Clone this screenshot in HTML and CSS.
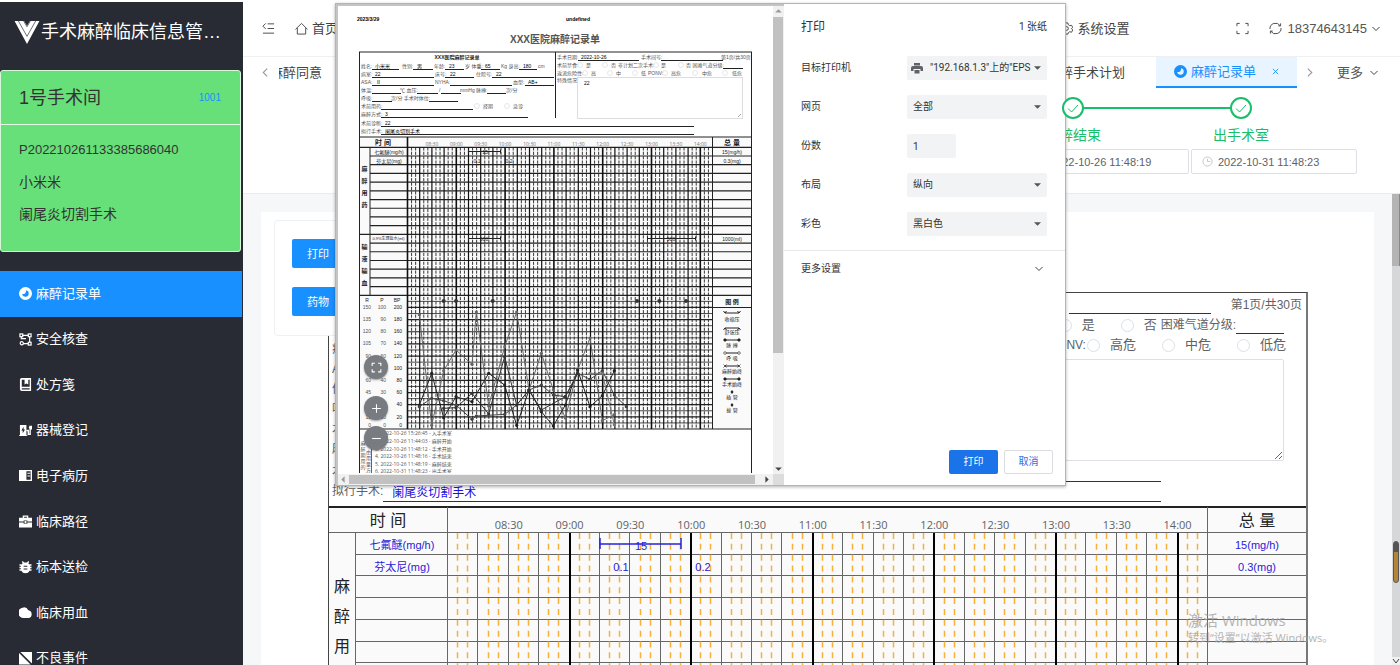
FILE: index.html
```html
<!DOCTYPE html>
<html lang="zh-CN">
<head>
<meta charset="utf-8">
<title>手术麻醉临床信息管理系统</title>
<link rel="stylesheet" href="styles.css">
</head>
<body>
<div class="app">
  <aside class="sidebar">
    <div class="brand">
      <svg class="brand-logo" viewBox="0 0 26 24"><path d="M0 0h10l3 5 3-5h10L13 24z" fill="#fff"/><path d="M4 0 13 16 22 0M9.500 0l3.500 6 3.500-6" fill="none" stroke="#282b33" stroke-width=".7"/></svg>
      <h1 class="brand-name">手术麻醉临床信息管…</h1>
    </div>
    <section class="room">
      <header class="room-head"><h2 class="room-name">1号手术间</h2><a class="room-no" href="#">1001</a></header>
      <div class="room-body"><p class="room-id">P202210261133385686040</p><p>小米米</p><p>阑尾炎切割手术</p></div>
    </section>
    <nav class="menu">
      <a class="menu-item active" href="#"><svg viewBox="0 0 14 14"><path fill-rule="evenodd" d="M7 0a7 7 0 1 0 0 14 7 7 0 0 0 0-14zM7.500 3.500a3.500 3.500 0 1 1-4 4 3.200 3.200 0 0 0 4-4z"/></svg>麻醉记录单</a>
      <a class="menu-item" href="#"><svg viewBox="0 0 14 14" class="line"><path d="M4 2.500h6M11.500 4v6M4.500 11.500H10M2.500 4v2h5"/><rect x="1" y="1" width="3" height="3"/><rect x="10" y="1" width="3" height="3"/><circle cx="3" cy="11" r="1.700"/><rect x="10" y="10" width="3" height="3"/></svg>安全核查</a>
      <a class="menu-item" href="#"><svg viewBox="0 0 14 14"><path fill-rule="evenodd" d="M3 0h10v14H3a2.200 2.200 0 0 1-2-2V2a2 2 0 0 1 2-2zm0 1.800V9.500h8.500V1.800H10V7L8 5.800 6 7V1.800zM3 11v1.300h8.500V11z"/></svg>处方笺</a>
      <a class="menu-item" href="#"><svg viewBox="0 0 14 14"><path fill-rule="evenodd" d="M1 1h7v11h1v1H0v-1h1zm4 2L2.500 7H4v3l2.500-4H5z"/><path d="M8 7h2v4h2V5l-1-2" fill="none" stroke="#fff" stroke-width="1.500"/><path d="M11 2h3v4h-2z"/></svg>器械登记</a>
      <a class="menu-item" href="#"><svg viewBox="0 0 14 14"><path fill-rule="evenodd" d="M0 1h14v12H0zm8 1.500v9h4.500v-9zM9 4h3v1.200H9zm0 3h3v1.200H9z"/></svg>电子病历</a>
      <a class="menu-item" href="#"><svg viewBox="0 0 14 14"><path fill-rule="evenodd" d="M4 3V.5h6V3h4v4H9V6H5v1H0V3zm1.500 0h3V2h-3zM0 8h5v1.500h4V8h5v5.500H0z"/><rect x="6" y="6.500" width="2" height="2.500"/></svg>临床路径</a>
      <a class="menu-item" href="#"><svg viewBox="0 0 14 14"><path fill-rule="evenodd" d="M4 0l1.500 1.500h3L10 0l1 1-1 1.500 1 1h2.500V5H12v1.200h1.500v1.600H12V9h1.500v1.500h-2a5 5 0 0 1-9 0h-2V9H2V7.800H.5V6.200H2V5H.5V3.500H3l1-1L3 1zm1 5v1.200h4V5zm0 3v1.200h4V8z"/></svg>标本送检</a>
      <a class="menu-item" href="#"><svg viewBox="0 0 14 14"><path d="M5 1.500a5 5 0 0 1 5 3A4.300 4.300 0 0 1 10 13H5A5.700 5.700 0 0 1 5 1.500z"/></svg>临床用血</a>
      <a class="menu-item" href="#"><svg viewBox="0 0 14 14"><path d="M1.500 0H14v12.500zM0 1l12.500 12.500H7L0 13.500z"/></svg>不良事件</a>
    </nav>
  </aside>

  <main class="main">
    <header class="topbar">
      <button class="icon-btn fold" aria-label="收起"><svg viewBox="0 0 14 14"><path d="M6 2h7M6 7h7M1 12h12M4 1.500 1 4.500l3 3"/></svg></button>
      <a class="nav-link" href="#"><svg viewBox="0 0 14 14"><path d="M.5 8 7 1.500 13.500 8M2.500 6.500v6.500h9V6.500"/></svg>首页</a>
      <a class="nav-link settings" href="#"><svg viewBox="0 0 14 14"><path d="M5.500 1h3l.5 2 1.500 1 2-.5 1.200 2.500L12.300 7l1.400 1.500-1.200 2.500-2-.5L9 11.500 8.500 13h-3L5 11.500l-1.500-1-2 .5L.3 8.500 1.700 7 .3 5.500 1.500 3.500l2 .5L5 3z"/><circle cx="7" cy="7" r="2"/></svg>系统设置</a>
      <button class="icon-btn" aria-label="全屏"><svg viewBox="0 0 14 14"><path d="M1 4.500V1.500h3M10 1.500h3v3M13 9.500v3h-3M4 12.500H1v-3"/></svg></button>
      <button class="user"><svg viewBox="0 0 14 14"><path d="M1 7.500A6 6 0 0 1 12 4M13 6.500A6 6 0 0 1 2 10M12.500 1.500v2.700H10M1.500 12.500V9.800H4"/></svg>18374643145<svg class="chev" viewBox="0 0 8 8"><path d="M.5 2 4 5.500 7.500 2"/></svg></button>
    </header>
    <nav class="tabs">
      <button class="arrow" aria-label="向左"><svg viewBox="0 0 8 8"><path d="M5.500.5 2 4l3.500 3.500"/></svg></button>
      <div class="tab-strip">
        <a class="tab-first" href="#">麻醉同意</a>
        <a class="tab-plan" href="#">麻醉手术计划</a>
        <a class="tab-active" href="#"><svg class="tab-icon" viewBox="0 0 14 14"><path fill-rule="evenodd" d="M7 0a7 7 0 1 0 0 14 7 7 0 0 0 0-14zM7.500 3.500a3.500 3.500 0 1 1-4 4 3.200 3.200 0 0 0 4-4z"/></svg>麻醉记录单<svg class="tab-close" viewBox="0 0 8 8"><path d="M1 1l6 6M7 1 1 7"/></svg></a>
      </div>
      <button class="arrow" aria-label="向右"><svg viewBox="0 0 8 8"><path d="M2.500.5 6 4 2.500 7.500"/></svg></button>
      <button class="more">更多<svg class="chev" viewBox="0 0 8 8"><path d="M.5 2 4 5.500 7.500 2"/></svg></button>
    </nav>
    <section class="steps">
      <div class="step">
        <div class="step-mark"><svg viewBox="0 0 22 22"><circle cx="11" cy="11" r="10"/><path d="M6 11.500l3.500 3.500 6.500-7"/></svg></div>
        <label class="step-name" for="t1">麻醉结束</label>
        <div class="step-time"><svg viewBox="0 0 12 12"><circle cx="6" cy="6" r="5"/><path d="M6 3v3h3"/></svg><input id="t1" value="2022-10-26 11:48:19"></div>
      </div>
      <div class="step last">
        <div class="step-mark"><svg viewBox="0 0 22 22"><circle cx="11" cy="11" r="10"/><path d="M6 11.500l3.500 3.500 6.500-7"/></svg></div>
        <label class="step-name" for="t2">出手术室</label>
        <div class="step-time"><svg viewBox="0 0 12 12"><circle cx="6" cy="6" r="5"/><path d="M6 3v3h3"/></svg><input id="t2" value="2022-10-31 11:48:23"></div>
      </div>
    </section>
    <section class="content">
      <div class="card">
        <div class="tools"><button class="primary">打印</button><button class="primary">药物</button></div>
        <div class="sheet">
          <div class="sheet-top">
            <div class="patient">
              <p class="patient-title">XXX医院麻醉记录单</p>
              <p>姓名:</p><p>病室:</p><p>ASA:</p><p>体温:</p><p>呼吸:</p><p>术前用药:</p><p>麻醉方式:</p>
            </div>
            <div class="surgery">
              <div class="row first"><label for="room">手术间号:</label><input id="room" class="blank wide"><span class="pages">第1页/共30页</span></div>
              <div class="row">
                <label class="opt"><input type="radio" name="again">是</label>
                <label class="opt"><input type="radio" name="again">否</label>
                <label class="grade" for="air">困难气道分级:</label><input id="air" class="blank short">
              </div>
              <div class="row ponv"><span>PONV:</span>
                <label class="opt"><input type="radio" name="ponv">高危</label>
                <label class="opt"><input type="radio" name="ponv">中危</label>
                <label class="opt"><input type="radio" name="ponv">低危</label>
              </div>
              <textarea class="note" aria-label="特殊情况"></textarea>
            </div>
          </div>
          <div class="full-row"><label for="diag">术前诊断:</label><input id="diag" value="22"></div>
          <div class="full-row"><label for="op">拟行手术:</label><input id="op" value="阑尾炎切割手术"></div>
          <svg id="record" class="record" viewBox="329 506 977 180"></svg>
        </div>
        <div class="watermark"><p class="wm-big">激活 Windows</p><p class="wm-small">转到“设置”以激活 Windows。</p></div>
      </div>
      <div class="page-scroll"><i class="thumb"></i><i class="pill"></i><svg viewBox="0 0 8 8"><path d="M1 2l3 4 3-4"/></svg></div>
    </section>
  </main>
</div>

<div class="dialog" role="dialog" aria-label="打印">
  <div class="preview">
    <svg id="paper" class="paper" viewBox="338 6 435 467"></svg>
    <div class="vbar"><svg viewBox="0 0 10 10"><path d="M2 6h6L5 3z"/></svg><i></i><svg viewBox="0 0 10 10"><path d="M2 4h6L5 7z" class="dark"/></svg></div>
    <div class="hbar"><svg viewBox="0 0 10 10"><path d="M6 2v6L3 5z"/></svg><i></i><svg viewBox="0 0 10 10"><path d="M4 2v6l3-3z" class="dark"/></svg></div>
    <div class="corner"></div>
    <div class="fabs">
      <button aria-label="适合页面"><svg viewBox="0 0 12 12"><path d="M2 4.500V2h2.500M7.500 2H10v2.500M10 7.500V10H7.500M4.500 10H2V7.500"/></svg></button>
      <button aria-label="放大" class="zoom-in"><svg viewBox="0 0 12 12"><path d="M6 2v8M2 6h8"/></svg></button>
      <button aria-label="缩小"><svg viewBox="0 0 12 12"><path d="M2 6h8"/></svg></button>
    </div>
  </div>
  <form class="options">
    <header class="opt-head"><h2>打印</h2><span>1 张纸</span></header>
    <div class="fields">
      <div class="field"><label for="printer">目标打印机</label><div class="select printer"><svg class="p-icon" viewBox="0 0 12 12"><path fill-rule="evenodd" d="M3 1h6v2.500H3zM2 4h8a2 2 0 0 1 2 2v3H9.500V7h-7v2H0V6a2 2 0 0 1 2-2zm1.500 4h5v3.500h-5z"/></svg><select id="printer"><option>"192.168.1.3"上的"EPS</option></select><svg class="tri" viewBox="0 0 8 4"><path d="M0 0h8L4 4z"/></svg></div></div>
      <div class="field"><label for="pg">网页</label><div class="select"><select id="pg"><option>全部</option></select><svg class="tri" viewBox="0 0 8 4"><path d="M0 0h8L4 4z"/></svg></div></div>
      <div class="field"><label for="num">份数</label><div class="select count"><input id="num" value="1"></div></div>
      <div class="field"><label for="lay">布局</label><div class="select"><select id="lay"><option>纵向</option></select><svg class="tri" viewBox="0 0 8 4"><path d="M0 0h8L4 4z"/></svg></div></div>
      <div class="field"><label for="col">彩色</label><div class="select"><select id="col"><option>黑白色</option></select><svg class="tri" viewBox="0 0 8 4"><path d="M0 0h8L4 4z"/></svg></div></div>
    </div>
    <button type="button" class="more-set">更多设置<svg viewBox="0 0 8 8"><path d="M.5 2 4 5.500 7.500 2"/></svg></button>
    <footer class="actions"><button type="button" class="ok">打印</button><button type="button" class="cancel">取消</button></footer>
  </form>
</div>
<script src="charts.js"></script>
</body>
</html>
```

FILE: styles.css
```css
* { box-sizing: border-box; }
body { margin: 0; height: 100vh; overflow: hidden; background: #fff; color: #444; font: 13px/20px "Liberation Sans", "Noto Sans CJK SC", sans-serif; }
h1, h2, p { margin: 0; font-weight: 400; }
a { color: inherit; text-decoration: none; }
button { border: 0; padding: 0; background: none; color: inherit; font: inherit; display: flex; align-items: center; justify-content: center; }
input, select, textarea { font: inherit; color: inherit; border: 0; padding: 0; margin: 0; background: none; outline: 0; border-radius: 0; }
svg { display: block; flex: none; }

.app { display: flex; height: 100vh; }
.sidebar { flex: none; width: 243px; margin-top: 2px; background: #282b33; color: #fff; overflow: hidden; }
.brand { display: flex; align-items: center; gap: 1px; height: 68px; padding: 0 14px 8px; }
.brand-logo { width: 26px; height: 23px; }
.brand-name { font-size: 18px; white-space: nowrap; }
.room { margin-right: 2px; height: 182px; border: 1px solid #d5f7da; border-radius: 3px; background: #67e079; color: #333; }
.room-head { display: flex; align-items: center; justify-content: space-between; height: 54px; padding: 0 19px 0 18px; border-bottom: 1px solid #e4fbe7; }
.room-name { font-size: 18px; }
.room-no { font-size: 10px; color: #1890ff; }
.room-body { display: flex; flex-direction: column; gap: 12px; padding: 15px 18px; font-size: 14px; }
.room-id { font-size: 13px; }
.menu { display: grid; grid-auto-rows: 1fr; height: 410px; margin-top: 19px; }
.menu-item { display: flex; align-items: center; gap: 4px; padding-left: 19px; margin-right: 1px; }
.menu-item svg { width: 13px; height: 13px; fill: #fff; }
.menu-item svg.line { fill: none; stroke: #fff; stroke-width: 1.300; }
.active { background: #1890ff; }

.main { flex: 1; min-width: 0; display: flex; flex-direction: column; }
.main svg { fill: none; stroke: #444; stroke-width: 1; }
.topbar { display: flex; align-items: center; height: 57px; padding: 1px 20px 0 19px; border-bottom: 1px solid #f0f0f0; flex: none; }
.topbar svg { width: 13px; height: 13px; }
.topbar .chev, .chev { width: 8px; height: 8px; }
.fold { margin-right: 20px; }
.nav-link { display: flex; align-items: center; gap: 4px; }
.settings { margin-left: auto; margin-right: 107px; }
.user { gap: 5px; margin-left: 20px; color: #555; }
.tabs { display: flex; align-items: center; height: 31px; padding: 0 22px 0 18px; flex: none; }
.arrow svg { width: 9px; height: 9px; }
.main .arrow svg { stroke: #999; }
.tab-strip { display: flex; align-items: center; flex: 1; height: 31px; margin: 0 8px 0 9px; overflow: hidden; }
.tab-strip .tab-first { margin-left: -9px; }
.tab-plan { margin-left: auto; margin-right: 31px; }
.tab-active { display: flex; align-items: center; height: 31px; padding: 0 18px; gap: 4px; background: #e8f4ff; border-bottom: 2px solid #1890ff; color: #1890ff; }
.main .tab-icon { width: 13px; height: 13px; fill: #1890ff; stroke: none; }
.main .tab-close { width: 7px; height: 7px; margin-left: 12px; stroke: #1890ff; }
.more { gap: 7px; margin-left: 23px; color: #555; }
.steps { display: flex; justify-content: flex-end; height: 105px; padding: 9px 43px 0 0; flex: none; }
.step { width: 168px; padding-left: 2px; }
.step-mark { display: flex; justify-content: center; position: relative; width: 100px; height: 22px; }
.main .step-mark svg { width: 22px; height: 22px; stroke: #19be6b; stroke-width: 2; fill: #fff; position: relative; z-index: 1; }
.main .step-mark svg path { stroke-width: 1; }
.step:not(.last) .step-mark::after { content: ""; position: absolute; left: 50%; top: 10px; width: 168px; height: 2px; background: #19be6b; }
.step-name { display: block; width: 100px; margin-top: 6px; height: 24px; text-align: center; font-size: 14px; color: #19be6b; }
.step-time { display: flex; align-items: center; gap: 5px; height: 25px; padding: 0 10px; border: 1px solid #dcdfe6; border-radius: 2px; color: #606266; font-size: 11px; }
.step-time svg { width: 11px; height: 11px; }
.main .step-time svg { stroke: #c0c4cc; }
.step-time input { width: 100%; }

.content { flex: 1; min-height: 0; display: flex; background: #f5f7f9; border-top: 1px solid #e9ebee; }
.card { position: relative; flex: 1; margin: 18px 18px 0 18px; padding: 80px 66px 0 67px; background: #fff; overflow: hidden; }
.tools { position: absolute; left: 13px; top: 8px; width: 110px; padding: 18px 17px; display: grid; gap: 18px; border: 1px solid #eef0f2; border-radius: 4px; background: #fff; }
.primary { width: 64px; height: 29px; margin-bottom: 1px; padding-right: 12px; background: #1890ff; border-radius: 2px; color: #fff; font-size: 11px; }
.sheet { border: 1px solid #444; border-right: 2px solid #777; color: #606266; font-size: 12px; }
.sheet-top { display: flex; justify-content: space-between; height: 168px; padding-left: 3px; overflow: hidden; }
.patient-title { height: 26px; }
.surgery { width: 420px; padding-right: 22px; }
.row { display: flex; align-items: center; justify-content: flex-end; height: 20px; }
.row.first { margin-right: -18px; height: 22px; padding-top: 1px; }
.blank { border-bottom: 1px solid #333; height: 18px; }
.wide { width: 142px; margin: 0 20px 0 3px; }
.short { width: 48px; }
.opt { display: flex; align-items: center; gap: 10px; margin-left: 26px; font-size: 13px; }
.opt input { appearance: none; width: 13px; height: 13px; border: 1px solid #dcdfe6; border-radius: 50%; }
.grade { margin-left: 4px; }
.row.ponv { margin-right: -2px; }
.ponv .opt:nth-child(2) { margin-left: 1px; }
.note { display: block; width: 100%; height: 102px; margin-top: 4px; border: 1px solid #dcdfe6; border-radius: 2px; }
.full-row { display: flex; height: 20px; margin: 0 145px 0 3px; }
.full-row input { flex: 1; height: 21px; padding-left: 9px; border-bottom: 1px solid #333; color: #1a10e0; }
.full-row + .record { margin-top: 5px; }
.main .record { width: 100%; height: auto; stroke: none; }
.watermark { position: absolute; right: 22px; top: 398px; width: 164px; color: #a3a3a3; opacity: .8; white-space: nowrap; font-family: "Open Sans", "Noto Sans CJK SC", sans-serif; }
.wm-big { font-size: 15px; }
.wm-small { font-size: 11px; line-height: 16px; }
.page-scroll { width: 8px; background: #d6d7d9; display: flex; flex-direction: column; align-items: center; }
.page-scroll .thumb { width: 8px; height: 72px; background: #b4b4b4; border-right: 1px solid #888; }
.page-scroll .pill { width: 6px; height: 42px; margin-top: 275px; border: 1px solid #555; border-radius: 3px; background: linear-gradient(#555 10px, #b5853c 10px); }
.page-scroll svg { width: 8px; height: 8px; margin-top: auto; background: #f1f1f1; }

.dialog { position: absolute; left: 335px; top: 3px; width: 731px; height: 483px; display: flex; background: #fff; border: 1px solid #b4b4b4; box-shadow: 0 1px 3px rgba(0,0,0,.3); color: #333; }
.preview { position: relative; width: 448px; display: grid; grid-template: 1fr 11px / 1fr 11px; border: solid #c4c4c4; border-width: 2px 0 0 2px; }
.paper { width: 435px; height: 467px; }
.vbar, .hbar { display: flex; background: #f1f1f1; }
.vbar { flex-direction: column; }
.vbar svg, .hbar svg { width: 11px; height: 11px; fill: #999; }
.vbar .dark, .hbar .dark { fill: #444; }
.vbar i { height: 336px; margin: 0 1px 0 0; background: #c1c1c1; }
.vbar svg:last-child { margin-top: auto; }
.hbar i { flex: 1; margin: 1px 6px 1px 0; background: #c1c1c1; }
.hbar svg:last-child { margin-right: 1px; }
.corner { background: #dcdcdc; }
.fabs { position: absolute; left: 26px; top: 349px; }
.fabs button { width: 24px; height: 24px; border-radius: 50%; background: #787c80; box-shadow: 0 1px 2px rgba(0,0,0,.4); }
.fabs .zoom-in { margin: 17px 0 6px; }
.fabs svg { width: 13px; height: 13px; fill: none; stroke: #fff; stroke-width: 1; }
.options { flex: 1; display: flex; flex-direction: column; font: 10px/16px Roboto, "Noto Sans CJK SC", sans-serif; }
.opt-head { display: flex; align-items: center; justify-content: space-between; height: 46px; padding: 0 18px 0 17px; }
.opt-head h2 { font-size: 12px; }
.fields { display: grid; gap: 15px; padding: 6px 18px 14px 17px; border-bottom: 1px solid #e6e8ea; }
.field { display: flex; align-items: center; justify-content: space-between; }
.select { position: relative; width: 140px; height: 24px; background: #f1f3f4; border-radius: 2px; }
.select select, .select input { display: block; appearance: none; width: 100%; height: 24px; padding: 0 16px 0 6px; }
.select.printer select { padding-left: 23px; }
.select.count { width: 49px; margin-right: 91px; }
.tri { position: absolute; right: 6px; top: 10px; width: 7px; height: 4px; fill: #555; }
.p-icon { position: absolute; left: 4px; top: 6px; width: 12px; height: 12px; fill: #5f6368; }
.more-set { justify-content: space-between; height: 36px; padding: 0 22px 0 17px; }
.more-set svg { width: 8px; height: 8px; fill: none; stroke: #444; }
.actions { display: flex; justify-content: flex-end; gap: 6px; margin-top: auto; padding: 0 12px 11px; }
.actions button { width: 49px; height: 24px; border-radius: 2px; }
.ok { background: #1a73e8; color: #fff; }
.actions .cancel { border: 1px solid #dadce0; color: #1a73e8; }
```

FILE: charts.js
```js
const sans = '"Liberation Sans", "Noto Sans CJK SC", sans-serif';
const hum = '"Open Sans", "Noto Sans CJK SC", sans-serif';
const times = ['08:30', '09:00', '09:30', '10:00', '10:30', '11:00', '11:30', '12:00', '12:30', '13:00', '13:30', '14:00'];

function line(x1, y1, x2, y2, color, w, dash) {
  return `<line x1="${x1}" y1="${y1}" x2="${x2}" y2="${y2}" stroke="${color}" stroke-width="${w}"${dash ? ` stroke-dasharray="${dash}"` : ''}/>`;
}
// y is the vertical middle of the text
function text(x, y, s, size, color, anchor = 'start', font = sans, weight = 400) {
  return `<text x="${x}" y="${y + size * 0.36}" font-size="${size}" fill="${color}" stroke="none" text-anchor="${anchor}" font-family='${font}' font-weight="${weight}">${s}</text>`;
}

// On-screen record table
function drawRecord() {
  const L = 448, R = 1208, T = 533, B = 690, cell = (R - L) / 25, row = 21.7;
  let o = '<rect x="329" y="506" width="977" height="190" fill="#fafafa"/>';
  o += line(329, 507, 1306, 507, '#222', 2);
  o += line(329, 532.5, 1306, 532.5, '#666', 1);
  for (let y = T + row; y < B; y += row) o += line(355, Math.round(y) - .5, 1306, Math.round(y) - .5, '#666', 1);
  for (let i = 0; i < 25; i++) for (const k of [1, 2]) {
    const x = Math.round(L + cell * (i + k / 3)) - .5;
    o += `<line x1="${x}" y1="${T}" x2="${x}" y2="${B}" stroke="#f7b13c" stroke-width="1.5" stroke-dasharray="6 4.85"/>`;
  }
  for (let i = 1; i < 25; i++) {
    const x = Math.round(L + cell * i), hour = i % 4 === 0;
    o += line(hour ? x : x - .5, T, hour ? x : x - .5, B, hour ? '#000' : '#666', hour ? 2 : 1);
  }
  for (const x of [447.5, 1207.5]) o += line(x, 507, x, B, '#666', 1);
  o += line(355.5, T, 355.5, B, '#666', 1);
  times.forEach((t, i) => { o += text(L + cell * 2 * (i + 1), 525, t, 11, '#606266', 'middle', hum); });
  o += text(388, 520, '时 间', 16, '#222', 'middle') + text(1257, 520, '总 量', 16, '#222', 'middle');
  ['麻', '醉', '用'].forEach((c, i) => { o += text(342, 586 + 30 * i, c, 16, '#222', 'middle'); });
  const blue = '#2a20d8';
  o += text(402, 545, '七氟醚(mg/h)', 11, blue, 'middle') + text(402, 567, '芬太尼(mg)', 11, blue, 'middle');
  o += text(1257, 545, '15(mg/h)', 11, blue, 'middle') + text(1257, 567, '0.3(mg)', 11, blue, 'middle');
  o += line(600, 544, 681, 544, blue, 1.5) + line(600, 538, 600, 549, blue, 1.5) + line(681, 538, 681, 549, blue, 1.5);
  o += text(641, 546, '15', 11, blue, 'middle') + text(621, 567, '0.1', 11, blue, 'middle') + text(703, 567, '0.2', 11, blue, 'middle');
  document.getElementById('record').innerHTML = o;
}

// Printed page shown in the preview
function drawPaper() {
  const k = '#222', g = '#555';
  let o = '<rect x="338" y="6" width="435" height="467" fill="#fff"/>';
  o += text(357, 19, '2023/3/29', 5, '#000', 'start', sans, 700) + text(578, 19, 'undefined', 5, '#000', 'middle', sans, 700);
  o += text(555, 39, 'XXX医院麻醉记录单', 10, '#555', 'middle', sans, 700);
  o += line(359, 52, 752, 52, k, 1) + line(359.5, 52, 359.5, 473, k, 1) + line(751.5, 52, 751.5, 473, k, 1) + line(555.5, 52, 555.5, 118, k, 1);
  o += text(457, 57.500, 'XXX医院麻醉记录单', 5, k, 'middle', sans, 700);

  const labels = [
    [361, 66.5, '姓名:'], [402, 66.5, '性别:'], [434, 66.5, '年龄:'], [465, 66.5, '岁 体重:'], [501, 66.5, 'Kg 身高:'], [538, 66.5, 'cm'],
    [361, 74.5, '病室:'], [435, 74.5, '床号:'], [476, 74.5, '住院号:'], [361, 82.5, 'ASA:'], [435, 82.5, 'NYHA:'], [513, 82.5, '血型:'],
    [361, 90.5, '体温:'], [400, 90.5, '℃ 血压:'], [439, 90.5, '/'], [460, 90.5, 'mmHg 脉搏:'], [506, 90.5, '次/分'],
    [361, 98.5, '呼吸:'], [391, 98.5, '次/分 手术时体位:'], [361, 106.5, '术前用药:'], [483, 106.5, '择期'], [513, 106.5, '急诊'],
    [361, 114.5, '麻醉方式:'], [361, 123, '术前诊断:'], [361, 131, '拟行手术:'],
    [557, 57, '手术日期:'], [641, 57, '手术间号:'], [721, 57, '第1页/共30页'],
    [557, 65, '术前禁食:'], [586, 65, '是'], [611, 65, '否'], [618, 65, '非计划二次手术:'], [661, 65, '是'], [686, 65, '否 困难气道分级:'],
    [557, 73, '返流危险性:'], [591, 73, '高'], [616, 73, '中'], [641, 73, '低'], [648, 73, 'PONV:'], [671, 73, '高危'], [702, 73, '中危'], [732, 73, '低危'],
    [557, 80, '特殊情况:']
  ];
  labels.forEach(([x, y, s]) => { o += text(x, y, s, 5, g); });
  const values = [[375, 66, '小米米'], [417, 66, '男'], [449, 66, '23'], [485, 66, '65'], [523, 66, '180'], [375, 74, '22'], [450, 74, '22'], [496, 74, '22'],
    [376, 82, 'Ⅱ'], [528, 82, 'AB+'], [385, 114, '3'], [385, 123, '22'], [385, 131, '阑尾炎切割手术'], [581, 57, '2022-10-26'], [584, 83, '22']];
  values.forEach(([x, y, s]) => { o += text(x, y, s, 5, '#000'); });
  const rules = [[372, 69.5, 399], [413, 69.5, 433], [445, 69.5, 464], [481, 69.5, 500], [519, 69.5, 537], [372, 77.5, 434], [445, 77.5, 474], [492, 77.5, 554],
    [372, 85.5, 434], [450, 85.5, 512], [525, 85.5, 554], [372, 93.5, 401], [417, 93.5, 438], [441, 93.5, 461], [487, 93.5, 506], [372, 101.5, 392], [429, 101.5, 458],
    [381, 109.5, 473], [381, 117.5, 528], [381, 126.5, 694], [381, 134.5, 694], [578, 60.5, 639], [661, 60.5, 723], [723, 68.5, 743]];
  rules.forEach(([x1, y, x2]) => { o += line(x1, y, x2, y, k, 1); });
  for (const [x, y] of [[477, 106], [507, 106], [580, 65], [605, 65], [656, 65], [681, 65], [585, 73], [610, 73], [635, 73], [665, 73], [695, 73], [725, 73]])
    o += `<circle cx="${x}" cy="${y}" r="2.5" fill="none" stroke="#ddd" stroke-width=".7"/>`;
  o += '<rect x="577.5" y="77.500" width="165" height="41" fill="none" stroke="#ddd"/>' + line(738, 117, 741, 114, g, .5);

  // table frame
  const L = 407.5, R = 712.5, T = 147.3, M = 295.3, B = 429, cell = 12.2, row = 8.706, vr = (B - M) / 22;
  o += '<rect x="360" y="137" width="391" height="292" fill="#fafafa"/>';
  o += line(359, 137, 752, 137, k, 1.2) + line(359, T, 752, T, k, 1.2);
  for (let i = 1; i <= 17; i++) {
    const y = T + row * i, full = i === 10 || i === 17;
    o += line(full ? 359 : 370, y, 752, y, k, 1.2);
  }
  for (let i = 1; i < 22; i++) o += line(L, M + vr * i, R, M + vr * i, k, i % 2 ? .8 : 1.2);
  o += line(359, B, 752, B, k, 1) + line(R, 307.5, 752, 307.5, k, 1);
  for (let i = 0; i < 25; i++) {
    const x = L + cell * i;
    o += line(x, i ? T : 137, x, B, '#111', i % 4 === 0 ? 1.6 : 1.2);
    o += line(x + cell / 3, T, x + cell / 3, B, k, .9, '3.2 1.2') + line(x + cell * 2 / 3, T, x + cell * 2 / 3, B, k, .9, '3.2 1.2');
  }
  o += line(R, 137, R, B, k, 1) + line(370, T, 370, M, k, 1);
  times.forEach((t, i) => { o += text(L + cell * 2 * (i + 1), 144, t, 5, '#777', 'middle', hum); });
  o += text(383, 142.5, '时 间', 7, k, 'middle', sans, 700) + text(732, 142.5, '总 量', 7, k, 'middle', sans, 700) + text(732, 302, '图 例', 6, k, 'middle', sans, 700);
  [['麻', 168.5], ['醉', 180.5], ['用', 192.5], ['药', 205], ['输', 246.5], ['液', 259], ['输', 271], ['血', 283]].forEach(([c, y]) => { o += text(364.5, y, c, 6, k, 'middle', sans, 700); });
  [[389, 152, '七氟醚(mg/h)'], [389, 161, '芬太尼(mg)'], [388.5, 239, '0.9%生理盐水(ml)'], [732, 152, '15(mg/h)'], [732, 161, '0.3(mg)'], [732, 239, '1000(ml)'],
    [485, 152, '15'], [477, 161, '0.1'], [509, 161, '0.2'], [484, 239, '500'], [671, 239, '500']].forEach(([x, y, s]) => { o += text(x, y, s, x === 388.5 ? 4 : 5, k, 'middle'); });
  for (const [a, b, y] of [[468.5, 500.5, 151.5], [468.5, 500.5, 238.5], [647.5, 695.5, 238.5]])
    o += line(a, y, b, y, k, 1) + line(a, y - 2, a, y + 2, k, 1) + line(b, y - 2, b, y + 2, k, 1);

  // vital sign scales
  [['R', 367], ['P', 382], ['BP', 397]].forEach(([s, x]) => { o += text(x, 300, s, 5, k, 'middle'); });
  for (let i = 0; i <= 10; i++) {
    const y = i === 10 ? 425.5 : 307 + 12.2 * i;
    o += text(371, y, 150 - 15 * i, 5, g, 'end') + text(386, y, 100 - 10 * i, 5, g, 'end') + text(402, y, 200 - 20 * i, 5, k, 'end');
  }

  // vital sign curves, in thirds of a unit from (335, 290)
  const X = v => 335 + v / 3, Y = v => 290 + v / 3;
  const series = [
    ['#666', [253, 74, 290, 406, 326, 242, 363, 180, 411, 223, 424, 66, 461, 348, 509, 170, 545, 66, 582, 300, 619, 190, 655, 300, 691, 384, 728, 240, 765, 144, 802, 392, 838, 374]],
    ['#222', [253, 345, 290, 250, 326, 383, 363, 320, 411, 335, 461, 250, 509, 285, 545, 406, 582, 300, 619, 365, 655, 408, 691, 345, 728, 240, 765, 350, 802, 317, 838, 242]],
    ['#444', [253, 350, 290, 325, 326, 332, 363, 345, 411, 388, 424, 378, 509, 373, 545, 345, 582, 300, 619, 285, 655, 315, 691, 320, 728, 250, 765, 268, 802, 242, 838, 315, 874, 350]],
    ['#333', [326, 355, 363, 353, 411, 310, 461, 372, 509, 200, 545, 345, 582, 300, 619, 360, 691, 320, 728, 250]],
    ['#777', [765, 250, 802, 250, 838, 404]]
  ];
  series.forEach(([c, p]) => {
    let pts = '', dots = '';
    for (let i = 0; i < p.length; i += 2) {
      pts += `${X(p[i])},${Y(p[i + 1])} `;
      dots += `<circle cx="${X(p[i])}" cy="${Y(p[i + 1])}" r="1.600" fill="${c}"/>`;
    }
    o += `<polyline points="${pts}" fill="none" stroke="${c}" stroke-width="1"/>${dots}`;
  });
  [326, 363, 473, 906, 973, 1053].forEach(v => { o += `<circle cx="${X(v)}" cy="301" r="2" fill="#333"/>`; });

  // legend
  const legend = [['收缩压', 313, 319, 'v'], ['舒张压', 328, 332, 'a'], ['脉 搏', 340, 345.5, 'dot'], ['呼 吸', 353, 358.5, 'ring'], ['麻醉始终', 366, 371.5, 'x'], ['手术始终', 379, 384.5, 'dot'], ['插 管', 392, 397, 'one'], ['拔 管', 405, 410, 'one']];
  legend.forEach(([s, y, ty, type]) => {
    if (type === 'one') o += `<path d="M732 ${y - 2}l1.500 2-1.500 2-1.500-2z" fill="${k}"/>`;
    else {
      o += line(725, y, 739, y, k, 1);
      for (const x of [725, 739]) {
        if (type === 'dot' || type === 'ring') o += `<circle cx="${x}" cy="${y}" r="1.300" fill="${type === 'dot' ? k : '#fff'}" stroke="${k}" stroke-width=".6"/>`;
        if (type === 'v') o += `<path d="M${x - 1.5} ${y - 2}l1.500 2 1.500-2" fill="none" stroke="${k}"/>`;
        if (type === 'a') o += `<path d="M${x - 1.5} ${y + 2}l1.500-2 1.500 2" fill="none" stroke="${k}"/>`;
        if (type === 'x') o += `<path d="M${x - 1.5} ${y - 1.5}l3 3m0-3l-3 3" fill="none" stroke="${k}" stroke-width=".7"/>`;
      }
    }
    o += text(732, ty, s, 5, k, 'middle');
  });

  // event list
  o += line(371.5, B, 371.5, 473, k, .7);
  ['1. 2022-10-26 15:26:45 - 入手术室', '2. 2022-10-26 11:44:03 - 麻醉开始', '3. 2022-10-26 11:48:12 - 手术开始', '4. 2022-10-26 11:48:16 - 手术结束', '5. 2022-10-26 11:48:19 - 麻醉结束', '6. 2022-10-31 11:48:23 - 出手术室']
    .forEach((s, i) => { o += text(375, 433.5 + 7.6 * i, s, 5, g, 'start', hum); });
  [...'麻醉期用的'].forEach((c, i) => { o += text(363, 443.5 + 6 * i, c, 5, g, 'middle'); });
  [...'由用量方'].forEach((c, i) => { o += text(368.5, 452 + 6 * i, c, 5, g, 'middle'); });
  document.getElementById('paper').innerHTML = o;
}

drawRecord();
drawPaper();
```
